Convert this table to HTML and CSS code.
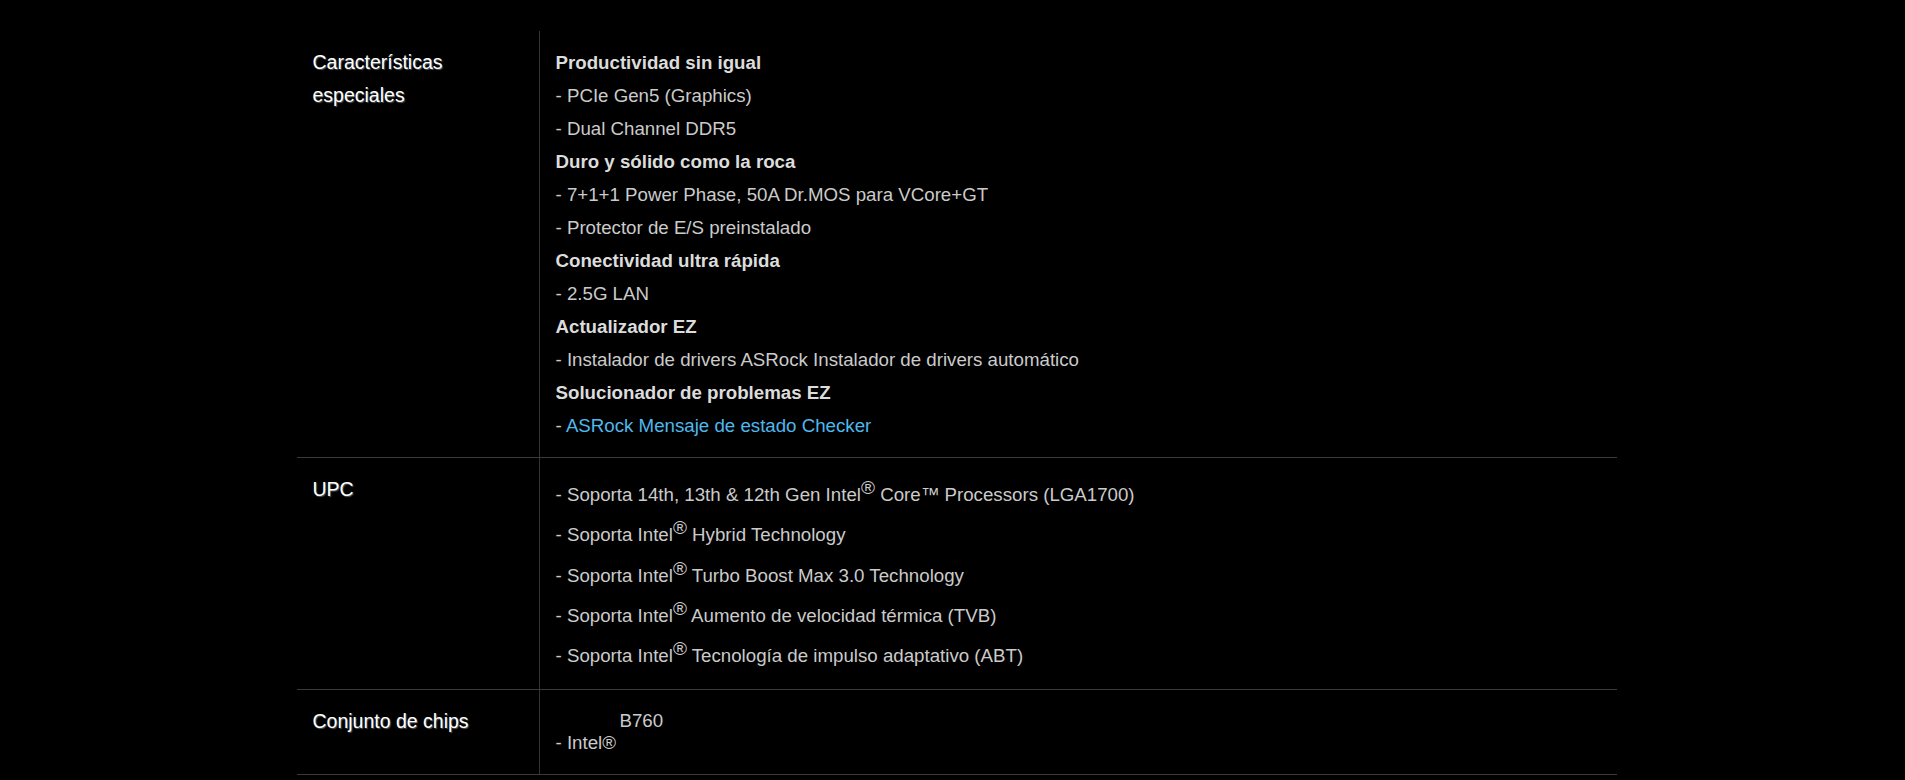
FILE: index.html
```html
<!DOCTYPE html>
<html lang="es">

<head>
    <meta charset="UTF-8">
    <meta name="viewport" content="width=device-width, initial-scale=1.0">
    <title>Especificaciones</title>
    <link rel="stylesheet" href="styles.css">
</head>

<body>
    <div class="wrapper">
        <div class="spec-table">
            <div class="spec-row">
                <div class="spec-label">Características especiales</div>
                <div class="spec-value">
                    <div class="line strong">Productividad sin igual</div>
                    <div class="line">- PCIe Gen5 (Graphics)</div>
                    <div class="line">- Dual Channel DDR5</div>
                    <div class="line strong">Duro y sólido como la roca</div>
                    <div class="line">- 7+1+1 Power Phase, 50A Dr.MOS para VCore+GT</div>
                    <div class="line">- Protector de E/S preinstalado</div>
                    <div class="line strong">Conectividad ultra rápida</div>
                    <div class="line">- 2.5G LAN</div>
                    <div class="line strong">Actualizador EZ</div>
                    <div class="line">- Instalador de drivers ASRock Instalador de drivers automático</div>
                    <div class="line strong">Solucionador de problemas EZ</div>
                    <div class="line">- <a href="#" class="link">ASRock Mensaje de estado Checker</a></div>
                </div>
            </div>
            <div class="spec-row">
                <div class="spec-label">UPC</div>
                <div class="spec-value">
                    <div class="line sup-line">- Soporta 14th, 13th &amp; 12th Gen Intel<sup>®</sup> Core™ Processors (LGA1700)</div>
                    <div class="line sup-line">- Soporta Intel<sup>®</sup> Hybrid Technology</div>
                    <div class="line sup-line">- Soporta Intel<sup>®</sup> Turbo Boost Max 3.0 Technology</div>
                    <div class="line sup-line">- Soporta Intel<sup>®</sup> Aumento de velocidad térmica (TVB)</div>
                    <div class="line sup-line">- Soporta Intel<sup>®</sup> Tecnología de impulso adaptativo (ABT)</div>
                </div>
            </div>
            <div class="spec-row">
                <div class="spec-label">Conjunto de chips</div>
                <div class="spec-value chipset">
                    <div class="chip-name">B760</div>
                    <div class="chip-brand">- Intel®</div>
                </div>
            </div>
        </div>
    </div>
</body>

</html>
```

FILE: styles.css
```css
* {
    box-sizing: border-box;
}

body {
    margin: 0;
    background-color: #000;
    font-family: "Liberation Sans", Arial, sans-serif;
    font-size: 18.7px;
    color: #cbcbcb;
}

.wrapper {
    width: 1330px;
    margin: 0 auto;
    padding: 31px 0 0 9px;
}

.spec-table {
    width: 1320px;
}

.spec-row {
    display: flex;
    border-bottom: 1px solid #3a3a3a;
}

.spec-label {
    width: 243px;
    flex-shrink: 0;
    padding: 15px 16px;
    border-right: 1px solid #333;
    color: #fff;
    font-size: 19.5px;
    line-height: 33px;
    text-shadow: 1px 1px 1px #555;
}

.spec-value {
    flex: 1;
    padding: 15px 16px;
}

.line {
    line-height: 33px;
}

.strong {
    font-weight: bold;
    color: #dcdcdc;
}

.link {
    color: #4fb8ec;
    text-decoration: none;
}

.sup-line {
    line-height: 40.3px;
    padding-top: 2px;
    margin-bottom: -2px;
}

.sup-line sup {
    font-size: 19px;
    line-height: 0;
}

.chipset {
    padding: 20px 16px;
    line-height: 22px;
}

.chip-name {
    padding-left: 64px;
}
```
